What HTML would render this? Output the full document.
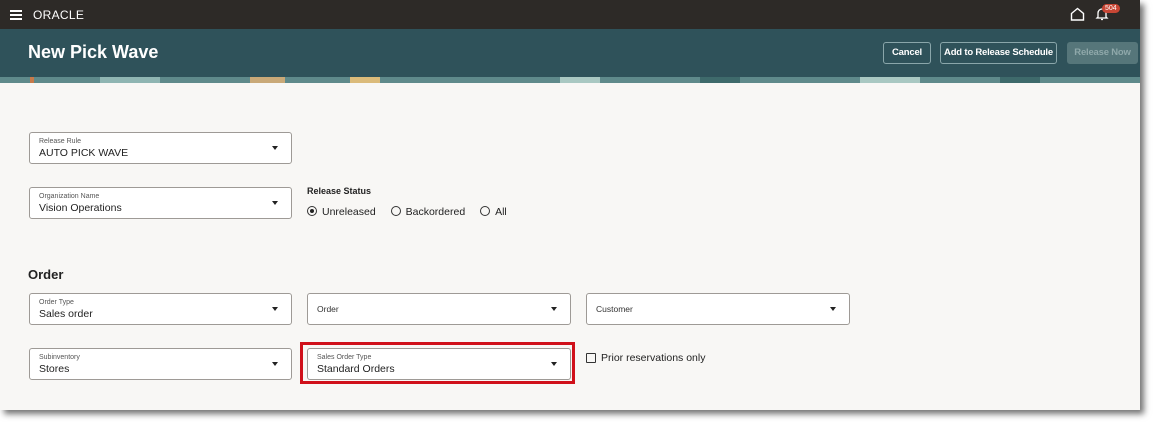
<!DOCTYPE html>
<html><head><meta charset="utf-8"><style>
*{box-sizing:border-box;margin:0;padding:0}
body{width:1153px;height:422px;background:#fff;font-family:"Liberation Sans",sans-serif;position:relative;overflow:hidden}
#page{position:absolute;left:0;top:0;width:1140px;height:410px;background:#f8f7f5;box-shadow:4px 4px 6px rgba(0,0,0,.55)}
#top{position:absolute;left:0;top:0;width:1140px;height:29px;background:#2d2a27}
#hdr{position:absolute;left:0;top:29px;width:1140px;height:48px;background:#2f525a}
#deco{position:absolute;left:0;top:77px;width:1140px;height:6px;background:#5f8a8b;overflow:hidden}
.t{position:absolute;white-space:nowrap}
.btn{position:absolute;top:13px;height:22px;border:1px solid #8aa6aa;border-radius:3px;color:#fff;font-size:9.5px;font-weight:bold;text-align:center;line-height:20px;white-space:nowrap;letter-spacing:-0.2px}
.f{position:absolute;height:32px;background:#fff;border:1px solid #9e9a96;border-radius:3px}
.f .l{position:absolute;left:9px;top:5px;font-size:7px;color:#555}
.f .v{position:absolute;left:9px;top:14px;font-size:10.5px;color:#222}
.f .c{position:absolute;left:9px;top:10px;font-size:8.5px;color:#333}
.f .a{position:absolute;right:13px;top:13px;width:0;height:0;border-left:3.5px solid transparent;border-right:3.5px solid transparent;border-top:4px solid #222}
.r{display:inline-block;width:10px;height:10px;border:1px solid #333;border-radius:50%;vertical-align:-1px;margin-right:5px;position:relative}
</style></head><body>
<div id="page">
<div id="top">
 <div style="position:absolute;left:10px;top:10px;width:12px;height:2px;background:#fff;box-shadow:0 4px 0 #fff,0 8px 0 #fff"></div>
 <div class="t" style="left:33px;top:8px;color:#fff;font-size:12px;letter-spacing:0.3px">ORACLE</div>
 <svg style="position:absolute;left:1070px;top:7px" width="15" height="14" viewBox="0 0 15 14"><path d="M1.5 6.5 L7.5 1.5 L13.5 6.5 V13 H1.5 Z" fill="none" stroke="#fff" stroke-width="1.4"/></svg>
 <svg style="position:absolute;left:1095px;top:7px" width="14" height="14" viewBox="0 0 14 14"><path d="M3 10 V6 a4 4 0 0 1 8 0 V10 L12 11 H2 Z M6 12.5 h2" fill="none" stroke="#fff" stroke-width="1.3"/></svg>
 <div class="t" style="left:1102px;top:4px;background:#c74634;color:#fff;font-size:7px;border-radius:6px;padding:1px 3px">504</div>
</div>
<div id="hdr">
 <div class="t" style="left:28px;top:13px;color:#fff;font-size:18px;font-weight:bold">New Pick Wave</div>
 <div class="btn" style="left:883px;width:48px">Cancel</div>
 <div class="btn" style="left:940px;width:117px">Add to Release Schedule</div>
 <div class="btn" style="left:1067px;width:71px;background:#56767a;border-color:#56767a;color:#8fa8aa">Release Now</div>
</div>
<div id="deco">
 <div style="position:absolute;left:30px;top:0;width:4px;height:6px;background:#c77a4a"></div>
 <div style="position:absolute;left:100px;top:0;width:60px;height:6px;background:#8fb5b2"></div>
 <div style="position:absolute;left:250px;top:0;width:35px;height:6px;background:#c9a978"></div>
 <div style="position:absolute;left:350px;top:0;width:30px;height:6px;background:#dbbb7a"></div>
 <div style="position:absolute;left:560px;top:0;width:40px;height:6px;background:#a9c8c2"></div>
 <div style="position:absolute;left:700px;top:0;width:40px;height:6px;background:#3e6a6b"></div>
 <div style="position:absolute;left:860px;top:0;width:60px;height:6px;background:#a9c8c2"></div>
 <div style="position:absolute;left:1000px;top:0;width:40px;height:6px;background:#3e6a6b"></div>
</div>

<div class="f" style="left:29px;top:132px;width:263px"><div class="l">Release Rule</div><div class="v">AUTO PICK WAVE</div><div class="a"></div></div>
<div class="f" style="left:29px;top:187px;width:263px"><div class="l">Organization Name</div><div class="v">Vision Operations</div><div class="a"></div></div>
<div class="t" style="left:307px;top:186px;font-size:9px;font-weight:bold;color:#222">Release Status</div>
<div class="t" style="left:307px;top:206px;font-size:10.5px;color:#222">
 <span class="r"><span style="position:absolute;left:2px;top:2px;width:4px;height:4px;border-radius:50%;background:#222"></span></span>Unreleased
 <span class="r" style="margin-left:12px"></span>Backordered
 <span class="r" style="margin-left:12px"></span>All
</div>

<div class="t" style="left:28px;top:267px;font-size:13px;font-weight:bold;color:#222">Order</div>
<div class="f" style="left:29px;top:293px;width:263px"><div class="l">Order Type</div><div class="v">Sales order</div><div class="a"></div></div>
<div class="f" style="left:307px;top:293px;width:264px"><div class="c">Order</div><div class="a"></div></div>
<div class="f" style="left:586px;top:293px;width:264px"><div class="c">Customer</div><div class="a"></div></div>
<div class="f" style="left:29px;top:348px;width:263px"><div class="l">Subinventory</div><div class="v">Stores</div><div class="a"></div></div>
<div style="position:absolute;left:300px;top:342px;width:275px;height:42px;border:3px solid #d0101a"></div>
<div class="f" style="left:307px;top:348px;width:264px"><div class="l">Sales Order Type</div><div class="v">Standard Orders</div><div class="a"></div></div>
<div style="position:absolute;left:586px;top:353px;width:10px;height:10px;border:1px solid #333;border-radius:1px"></div>
<div class="t" style="left:601px;top:352px;font-size:10.5px;color:#222">Prior reservations only</div>
</div>
</body></html>
